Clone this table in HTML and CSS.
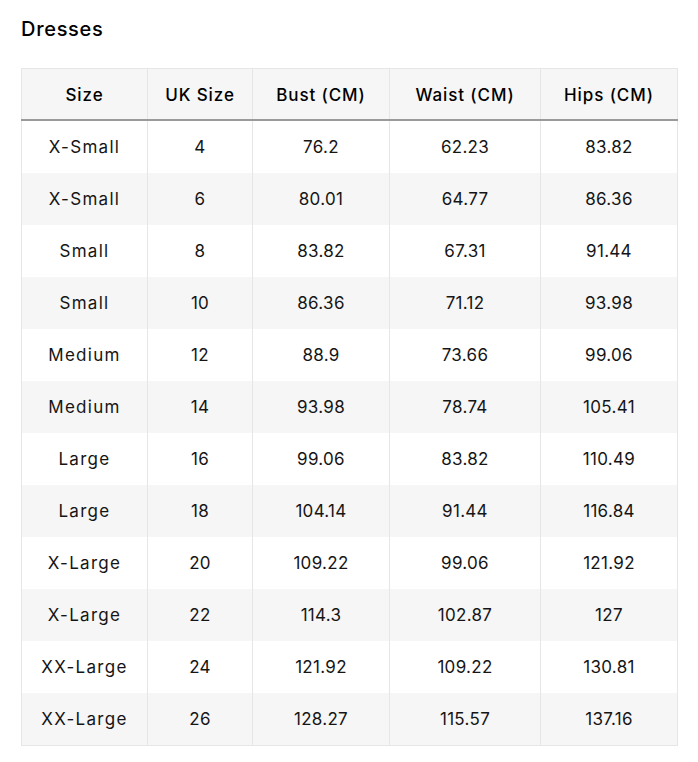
FILE: index.html
```html
<!DOCTYPE html>
<html>
<head>
<meta charset="utf-8">
<link rel="stylesheet" href="styles.css">
</head>
<body>
<div class="page">
  <h2 class="title">Dresses</h2>
  <table class="size-table">
    <colgroup>
      <col class="c1"><col class="c2"><col class="c3"><col class="c4"><col class="c5">
    </colgroup>
    <thead>
      <tr><th>Size</th><th>UK Size</th><th>Bust (CM)</th><th>Waist (CM)</th><th>Hips (CM)</th></tr>
    </thead>
    <tbody>
      <tr><td>X-Small</td><td>4</td><td>76.2</td><td>62.23</td><td>83.82</td></tr>
      <tr><td>X-Small</td><td>6</td><td>80.01</td><td>64.77</td><td>86.36</td></tr>
      <tr><td>Small</td><td>8</td><td>83.82</td><td>67.31</td><td>91.44</td></tr>
      <tr><td>Small</td><td>10</td><td>86.36</td><td>71.12</td><td>93.98</td></tr>
      <tr><td>Medium</td><td>12</td><td>88.9</td><td>73.66</td><td>99.06</td></tr>
      <tr><td>Medium</td><td>14</td><td>93.98</td><td>78.74</td><td>105.41</td></tr>
      <tr><td>Large</td><td>16</td><td>99.06</td><td>83.82</td><td>110.49</td></tr>
      <tr><td>Large</td><td>18</td><td>104.14</td><td>91.44</td><td>116.84</td></tr>
      <tr><td>X-Large</td><td>20</td><td>109.22</td><td>99.06</td><td>121.92</td></tr>
      <tr><td>X-Large</td><td>22</td><td>114.3</td><td>102.87</td><td>127</td></tr>
      <tr><td>XX-Large</td><td>24</td><td>121.92</td><td>109.22</td><td>130.81</td></tr>
      <tr><td>XX-Large</td><td>26</td><td>128.27</td><td>115.57</td><td>137.16</td></tr>
    </tbody>
  </table>
</div>
</body>
</html>
```
FILE: styles.css
```css
html, body {
  margin: 0;
  padding: 0;
  background: #ffffff;
}
.page {
  padding: 14px 21px 0 21px;
  font-family: "Inter", "Open Sans", sans-serif;
  color: #111111;
}
.title {
  margin: 0 0 24px 0;
  font-size: 20px;
  line-height: 30px;
  font-weight: 500;
  letter-spacing: 0.7px;
  color: #000;
}
.size-table {
  border-collapse: collapse;
  table-layout: fixed;
  width: 657px;
  font-size: 17px;
  border: 1px solid #e6e6e6;
}
.c1 { width: 126px; }
.c2 { width: 105px; }
.c3 { width: 137px; }
.c4 { width: 151px; }
.c5 { width: 137px; }
.size-table th,
.size-table td {
  border-left: 1px solid #e6e6e6;
  border-right: 1px solid #e6e6e6;
  text-align: center;
  padding: 0;
  height: 52px;
}
.size-table th {
  font-weight: 500;
  background: #f6f6f6;
  border-bottom: 2px solid #9a9a9a;
  height: 48px;
  padding-top: 2px;
  letter-spacing: 0.9px;
  color: #000;
}
.size-table td {
  font-weight: 400;
  color: #151515;
  letter-spacing: 0.3px;
}
.size-table td:first-child {
  letter-spacing: 1.3px;
}
.size-table tbody tr:nth-child(even) td {
  background: #f6f6f6;
}
```
